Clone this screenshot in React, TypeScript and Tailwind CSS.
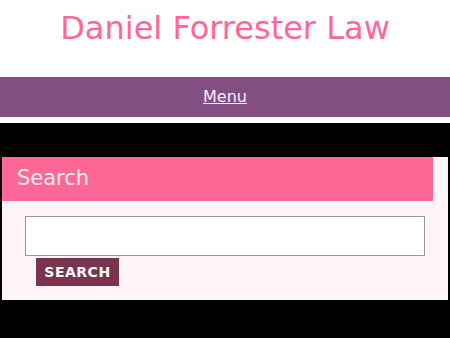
import React from "react";

export default function App() {
  return (
    <div
      className="min-h-screen bg-black"
      style={{ fontFamily: '"DejaVu Sans", sans-serif' }}
    >
      <header className="flex h-[77px] items-start justify-center bg-white pt-[8px]">
        <h1 className="text-[32px] leading-[40px] text-[#ff6699]">
          Daniel Forrester Law
        </h1>
      </header>
      <nav className="flex h-[40px] items-center justify-center bg-[#834f82]">
        <a href="#" className="text-[16px] text-[#fbeefa] underline">
          Menu
        </a>
      </nav>
      <div className="h-[6px] bg-white" />

      <main className="pt-[34px]">
        <section className="mx-[2px] bg-[#fff5f8] pb-[14px]">
          <h2 className="mr-[15px] flex h-[44px] items-center bg-[#ff6896] pl-[15px] text-[21px] text-[#ffe9f0]">
            Search
          </h2>
          <form className="px-[23px] pt-[15px]">
            <input
              type="text"
              aria-label="Search"
              className="block h-[40px] w-[400px] border border-[#999] bg-white"
            />
            <button
              type="button"
              className="ml-[11px] mt-[2px] h-[28px] w-[83px] bg-[#7b3450] text-[14px] font-bold tracking-[0.5px] text-white"
            >
              SEARCH
            </button>
          </form>
        </section>
      </main>
    </div>
  );
}
